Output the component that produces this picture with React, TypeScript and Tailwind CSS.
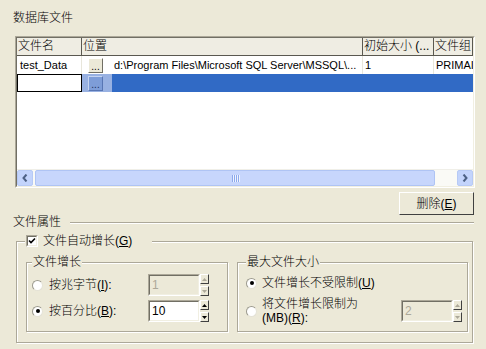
import React from "react";

const font = "font-[Tahoma,'Liberation_Sans','Noto_Sans_CJK_SC',sans-serif] font-light";

// classic 3D borders
const sunkenOuter = "border border-t-[#ACA899] border-l-[#ACA899] border-b-white border-r-white";
const sunkenInner = "border border-t-[#716F64] border-l-[#716F64] border-b-[#F1EFE2] border-r-[#F1EFE2]";
const raisedOuter = "border border-t-white border-l-white border-b-[#404040] border-r-[#404040]";
const etched = "border border-[#ACA899] shadow-[1px_1px_0_#fff,inset_1px_1px_0_#fff]";

function Key({ k }: { k: string }) {
  return <span className="underline underline-offset-[1px]">{k}</span>;
}

function Radio({ checked }: { checked?: boolean }) {
  return (
    <span className="w-[11px] h-[11px] shrink-0 rounded-full bg-white border border-t-[#9C9A8E] border-l-[#9C9A8E] border-b-[#E4E2D6] border-r-[#E4E2D6] flex items-center justify-center">
      {checked && <span className="w-[4px] h-[4px] rounded-full bg-black" />}
    </span>
  );
}

function SpinArrow({ up, disabled }: { up?: boolean; disabled?: boolean }) {
  return (
    <div className={`w-[9px] h-[10px] bg-[#ECE9D8] ${raisedOuter} flex items-center justify-center`}>
      <svg width="5" height="3" viewBox="0 0 5 3">
        <path d={up ? "M2.5 0L5 3H0Z" : "M0 0H5L2.5 3Z"} fill={disabled ? "#ACA899" : "#000"} />
      </svg>
    </div>
  );
}

function SpinBox({ value, disabled }: { value: string; disabled?: boolean }) {
  return (
    <div className="flex h-[22px] shrink-0">
      <div className={`w-[52px] h-full ${sunkenOuter}`}>
        <div
          className={`h-full ${sunkenInner} pl-[2px] text-[12px] leading-[18px] ${
            disabled ? "bg-[#ECE9D8] text-[#ACA899]" : "bg-white text-black"
          }`}
        >
          {value}
        </div>
      </div>
      <div className="flex flex-col justify-between">
        <SpinArrow up disabled={disabled} />
        <SpinArrow disabled={disabled} />
      </div>
    </div>
  );
}

function DotsButton({ selected }: { selected?: boolean }) {
  return (
    <div
      className={`w-[15px] h-[15px] border flex items-end justify-center text-[10px] leading-[11px] ${
        selected
          ? "bg-[#7E9DD8] border-t-[#C5D4F0] border-l-[#C5D4F0] border-b-[#5876B4] border-r-[#5876B4] text-[#1b2f5a]"
          : "bg-[#ECE9D8] border-t-white border-l-white border-b-[#716F64] border-r-[#716F64]"
      }`}
    >
      ...
    </div>
  );
}

function ScrollButton({ dir }: { dir: "left" | "right" }) {
  return (
    <div className="w-[16px] h-full rounded-[2px] border border-[#B7CAF5] bg-[#C3D4FC] flex items-center justify-center shrink-0">
      <svg width="6" height="8" viewBox="0 0 6 8">
        <path
          d={dir === "left" ? "M4.5 0.5L1.5 4L4.5 7.5" : "M1.5 0.5L4.5 4L1.5 7.5"}
          fill="none"
          stroke="#4D6185"
          strokeWidth="2"
        />
      </svg>
    </div>
  );
}

const headers = ["文件名", "位置", "初始大小 (...", "文件组"];
const colW = ["w-[65px]", "w-[281px]", "w-[71px]", "w-[39px]"];

export default function App() {
  return (
    <div className={`w-[486px] h-[349px] bg-[#ECE9D8] text-black overflow-hidden flex flex-col pt-[11px] ${font}`}>
      {/* Section title */}
      <div className="pl-[13px] text-[12px] leading-[14px]">数据库文件</div>

      {/* Files grid */}
      <div className={`ml-[15px] mt-[11px] w-[460px] h-[152px] shrink-0 ${sunkenOuter}`}>
        <div className={`h-full ${sunkenInner} bg-white flex flex-col overflow-hidden`}>
          {/* header */}
          <div className="flex h-[18px] shrink-0 bg-[#EFEDE3]">
            {headers.map((h, i) => (
              <div
                key={h}
                className={`${colW[i]} shrink-0 border-r border-b border-[#5A5850] pl-[1px] text-[12px] leading-[16px] whitespace-nowrap overflow-hidden`}
              >
                {h}
              </div>
            ))}
          </div>

          {/* row 1 */}
          <div className="flex h-[18px] shrink-0 text-[11px] leading-[18px]">
            <div className="w-[65px] shrink-0 border-r border-[#E8E6DB] pl-[3px]">test_Data</div>
            <div className="w-[281px] shrink-0 border-r border-[#E8E6DB] flex items-center overflow-hidden">
              <div className="w-[30px] h-full shrink-0 flex items-center pl-[6px]">
                <DotsButton />
              </div>
              <div className="pl-[2px] whitespace-nowrap">
                {"d:\\Program Files\\Microsoft SQL Server\\MSSQL\\..."}
              </div>
            </div>
            <div className="w-[71px] shrink-0 border-r border-[#E8E6DB] pl-[2px]">1</div>
            <div className="w-[39px] shrink-0 pl-[2px] whitespace-nowrap overflow-hidden">PRIMAI</div>
          </div>

          {/* row 2 (selected, editing) */}
          <div className="flex h-[18px] shrink-0 bg-[#316AC5]">
            <div className="w-[65px] shrink-0 bg-white border border-black" />
            <div className="w-[30px] h-full shrink-0 bg-[#98B1E2] flex items-center pl-[6px]">
              <DotsButton selected />
            </div>
          </div>

          <div className="flex-1" />

          {/* horizontal scrollbar */}
          <div className="h-[17px] shrink-0 flex bg-[#FAFAF6] border-t border-[#F0EFE8]">
            <ScrollButton dir="left" />
            <div className="flex-1 pl-[2px]">
              <div className="w-[400px] h-full rounded-[2px] border border-[#AFC4F4] bg-[#C7D6FC] flex items-center justify-center gap-[1px]">
                {[0, 1, 2, 3].map((g) => (
                  <span key={g} className="w-[1px] h-[7px] bg-[#8DA9EC] shadow-[1px_0_0_#EEF3FE]" />
                ))}
              </div>
            </div>
            <ScrollButton dir="right" />
          </div>
        </div>
      </div>

      {/* delete button */}
      <div className="flex justify-end pr-[12px] mt-[4px]">
        <div className={`w-[75px] h-[23px] bg-[#ECE9D8] ${raisedOuter} flex items-center justify-center text-[12px]`}>
          <span>
            删除(<Key k="E" />)
          </span>
        </div>
      </div>

      {/* file properties separator */}
      <div className="flex items-center h-[13px] mt-[1px] pl-[13px] pr-[12px]">
        <span className="text-[12px] leading-[13px]">文件属性</span>
        <div className="flex-1 ml-[9px] border-t border-b border-t-[#ACA899] border-b-white" />
      </div>

      {/* autogrowth group */}
      <fieldset className={`ml-[16px] mt-[5px] w-[457px] h-[109px] ${etched}`}>
        <legend className="ml-[8px] pl-[1px] pr-[20px] h-[14px] flex items-center gap-[5px] bg-[#ECE9D8] text-[12px] leading-[14px]">
          <span className={`w-[12px] h-[12px] ${sunkenOuter}`}>
            <span className={`block w-full h-full ${sunkenInner} bg-white`}>
              <svg width="8" height="8" viewBox="0 0 8 8" className="block">
                <path d="M1 3.5L3 5.5L7 1.5" fill="none" stroke="#000" strokeWidth="1.6" />
              </svg>
            </span>
          </span>
          <span>
            文件自动增长(<Key k="G" />)
          </span>
        </legend>

        <div className="flex gap-[9px] pl-[9px] mt-[7px]">
          {/* growth */}
          <fieldset className={`w-[202px] h-[77px] ${etched}`}>
            <legend className="ml-[5px] px-[1px] bg-[#ECE9D8] text-[12px] leading-[14px]">文件增长</legend>
            <div className="flex flex-col gap-[4px] mt-[5px] pl-[5px] pr-[18px] text-[12px]">
              <div className="flex items-center h-[22px]">
                <Radio />
                <span className="ml-[6px]">
                  按兆字节(<Key k="I" />):
                </span>
                <div className="ml-auto">
                  <SpinBox value="1" disabled />
                </div>
              </div>
              <div className="flex items-center h-[22px]">
                <Radio checked />
                <span className="ml-[6px]">
                  按百分比(<Key k="B" />):
                </span>
                <div className="ml-auto">
                  <SpinBox value="10" />
                </div>
              </div>
            </div>
          </fieldset>

          {/* max size */}
          <fieldset className={`w-[231px] h-[77px] ${etched}`}>
            <legend className="ml-[8px] px-[1px] bg-[#ECE9D8] text-[12px] leading-[14px]">最大文件大小</legend>
            <div className="flex flex-col gap-[4px] mt-[3px] pl-[8px] pr-[5px] text-[12px]">
              <div className="flex items-center h-[22px]">
                <Radio checked />
                <span className="ml-[5px]">
                  文件增长不受限制(<Key k="U" />)
                </span>
              </div>
              <div className="flex items-center h-[26px]">
                <Radio />
                <span className="ml-[5px] leading-[14px]">
                  将文件增长限制为
                  <br />
                  (MB)(<Key k="R" />):
                </span>
                <div className="ml-auto">
                  <SpinBox value="2" disabled />
                </div>
              </div>
            </div>
          </fieldset>
        </div>
      </fieldset>
    </div>
  );
}
